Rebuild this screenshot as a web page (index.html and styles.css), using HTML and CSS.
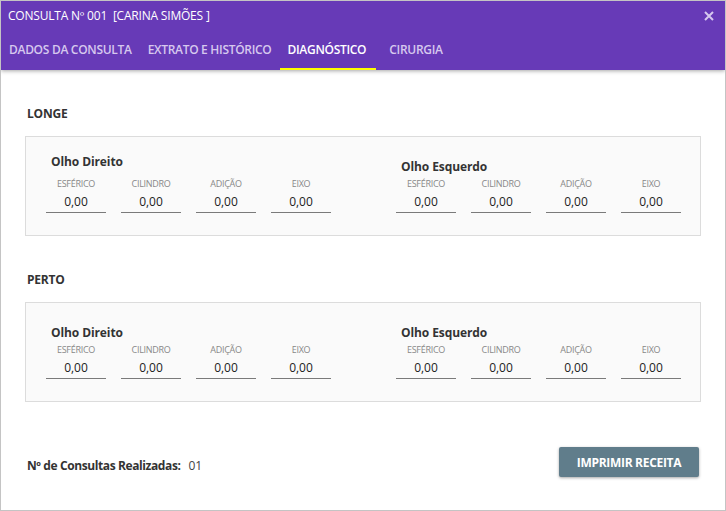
FILE: index.html
```html
<!DOCTYPE html>
<html lang="pt">
<head>
<meta charset="utf-8">
<link rel="stylesheet" href="styles.css">
</head>
<body>
<div class="window">
  <header class="header">
    <div class="title-row">
      <span class="title">CONSULTA Nº 001&nbsp; [CARINA SIMÕES ]</span>
      <svg class="close" width="10" height="10" viewBox="0 0 10 10"><path d="M1 1L9 9M9 1L1 9" stroke="#d6c8ee" stroke-width="2"/></svg>
    </div>
    <nav class="tabs">
      <span class="tab">DADOS DA CONSULTA</span>
      <span class="tab">EXTRATO E HISTÓRICO</span>
      <span class="tab active">DIAGNÓSTICO</span>
      <span class="tab">CIRURGIA</span>
    </nav>
  </header>
  <main class="content">
    <h2 class="section-title">LONGE</h2>
    <div class="panel">
      <div class="eye">
        <div class="eye-title">Olho Direito</div>
        <div class="fields">
          <div class="field"><span class="label">ESFÉRICO</span><span class="value">0,00</span></div>
          <div class="field"><span class="label">CILINDRO</span><span class="value">0,00</span></div>
          <div class="field"><span class="label">ADIÇÃO</span><span class="value">0,00</span></div>
          <div class="field"><span class="label">EIXO</span><span class="value">0,00</span></div>
        </div>
      </div>
      <div class="eye">
        <div class="eye-title low">Olho Esquerdo</div>
        <div class="fields">
          <div class="field"><span class="label">ESFÉRICO</span><span class="value">0,00</span></div>
          <div class="field"><span class="label">CILINDRO</span><span class="value">0,00</span></div>
          <div class="field"><span class="label">ADIÇÃO</span><span class="value">0,00</span></div>
          <div class="field"><span class="label">EIXO</span><span class="value">0,00</span></div>
        </div>
      </div>
    </div>
    <h2 class="section-title">PERTO</h2>
    <div class="panel">
      <div class="eye">
        <div class="eye-title low">Olho Direito</div>
        <div class="fields">
          <div class="field"><span class="label">ESFÉRICO</span><span class="value">0,00</span></div>
          <div class="field"><span class="label">CILINDRO</span><span class="value">0,00</span></div>
          <div class="field"><span class="label">ADIÇÃO</span><span class="value">0,00</span></div>
          <div class="field"><span class="label">EIXO</span><span class="value">0,00</span></div>
        </div>
      </div>
      <div class="eye">
        <div class="eye-title low">Olho Esquerdo</div>
        <div class="fields">
          <div class="field"><span class="label">ESFÉRICO</span><span class="value">0,00</span></div>
          <div class="field"><span class="label">CILINDRO</span><span class="value">0,00</span></div>
          <div class="field"><span class="label">ADIÇÃO</span><span class="value">0,00</span></div>
          <div class="field"><span class="label">EIXO</span><span class="value">0,00</span></div>
        </div>
      </div>
    </div>
    <div class="footer">
      <div class="count"><span class="count-label">Nº de Consultas Realizadas:</span><span class="count-value">01</span></div>
      <button class="print">IMPRIMIR RECEITA</button>
    </div>
  </main>
</div>
</body>
</html>
```
FILE: styles.css
```css
* { box-sizing: border-box; }
html, body { margin: 0; padding: 0; background: #fff; }
body { font-family: "Open Sans", "Noto Sans", sans-serif; color: #333; }
.window {
  width: 726px; height: 511px;
  border: 1px solid #c4c4c4;
  display: flex; flex-direction: column;
  overflow: hidden;
}
.header {
  background: #673ab7;
  height: 69px;
  flex-shrink: 0;
  box-shadow: 0 1px 4px rgba(0,0,0,0.35);
  position: relative;
  z-index: 1;
}
.title-row {
  height: 29px;
  display: flex; align-items: center; justify-content: space-between;
  padding: 0 11px 0 7px;
}
.title { color: #fff; font-size: 12px; letter-spacing: -0.2px; }
.close { display: block; }
.tabs { display: flex; height: 40px; }
.tab {
  padding: 0 8px;
  display: flex; align-items: center;
  font-size: 12px; font-weight: 600; letter-spacing: -0.3px;
  color: #d6c8ee;
  border-bottom: 2px solid transparent;
  padding-top: 1px;
}
.tab.active { color: #fff; border-bottom-color: #ffff00; padding-right: 10px; }
.tab.active + .tab { margin-left: 5px; }
.content { padding: 0 24px 0 24px; flex: 1; }
.section-title {
  margin: 36px 0 14px; font-size: 12px; font-weight: 700;
  letter-spacing: -0.2px; color: #333;
  height: 16px; line-height: 16px;
  padding-left: 2px;
}
.panel {
  background: #fafafa;
  border: 1px solid #dcdcdc;
  height: 100px;
  display: flex;
  padding: 16px 0 0 20px;
}
.eye { width: 350px; flex-shrink: 0; }
.eye-title {
  font-size: 12px; font-weight: 700; color: #333;
  height: 17px; line-height: 17px; padding-left: 5px;
  letter-spacing: -0.1px;
}
.eye-title.low { margin-top: 5px; margin-bottom: -5px; }
.fields { display: flex; gap: 15px; margin-top: 7px; }
.field {
  width: 60px;
  display: flex; flex-direction: column; align-items: center;
  border-bottom: 1px solid #7a7a7a;
}
.label { font-size: 9px; color: #888; height: 14px; line-height: 14px; letter-spacing: -0.3px; }
.value { font-size: 12px; color: #222; height: 21px; line-height: 21px; }
.footer {
  margin-top: 45px;
  display: flex; align-items: center; justify-content: space-between;
  padding-left: 2px;
}
.count { font-size: 12px; padding-top: 6px; }
.count-label { font-weight: 700; color: #333; letter-spacing: -0.4px; }
.count-value { color: #444; margin-left: 8px; }
.print {
  width: 140px; height: 30px;
  background: #607d8b; color: #fff;
  border: none; border-radius: 2px;
  font-family: inherit; font-size: 12px; font-weight: 700;
  letter-spacing: -0.3px;
  box-shadow: 0 1px 3px rgba(0,0,0,0.35);
  margin-right: 2px;
}
```
